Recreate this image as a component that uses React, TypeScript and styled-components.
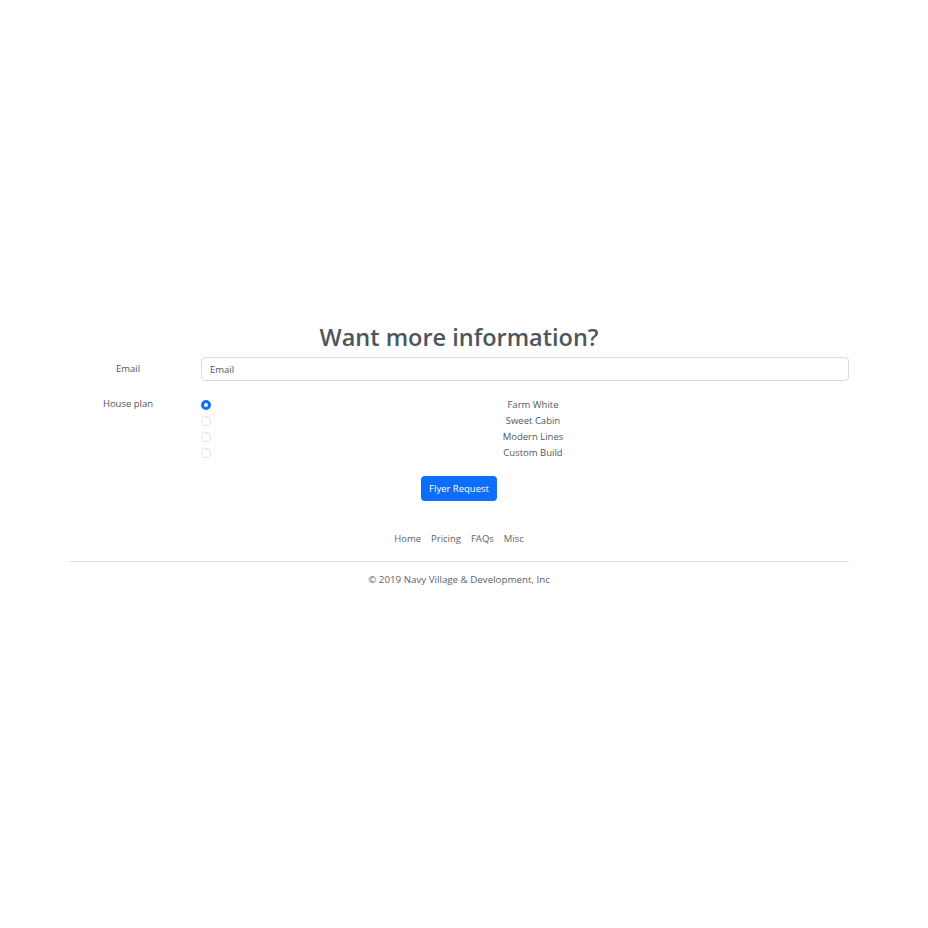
import React from "react";
import styled, { createGlobalStyle } from "styled-components";

const Global = createGlobalStyle`
  html, body { margin: 0; padding: 0; background: #fff; }
  body { font-family: "Open Sans", "Noto Sans", sans-serif; color: #212529; }
  * { box-sizing: border-box; }
`;

const Page = styled.div`
  width: 928px;
  min-height: 928px;
  display: flex;
  justify-content: center;
  padding-top: 322px;
  padding-right: 10px;
`;

const Container = styled.div`
  width: 780px;
  display: flex;
  flex-direction: column;
`;

const Heading = styled.h2`
  margin: 0;
  font-size: 23.5px;
  line-height: 31px;
  font-weight: 600;
  color: #4e565c;
  text-align: center;
`;

const Form = styled.form`
  display: flex;
  flex-direction: column;
  margin-top: 4px;
`;

const Row = styled.div<{ $mt?: number }>`
  display: grid;
  grid-template-columns: 118px 1fr;
  column-gap: 14px;
  align-items: start;
  margin-top: ${(p) => p.$mt ?? 0}px;
`;

const Label = styled.label<{ $pt?: number }>`
  font-size: 9.5px;
  line-height: 16px;
  color: #50565c;
  text-align: center;
  padding-top: ${(p) => p.$pt ?? 0}px;
`;

const Input = styled.input`
  height: 24px;
  width: 100%;
  border: 1px solid #d8dbdf;
  border-radius: 4px;
  padding: 0 8px;
  font-family: inherit;
  font-size: 9.5px;
  color: #50565c;
  &::placeholder { color: #50565c; }
  outline: none;
`;

const Options = styled.div`
  display: flex;
  flex-direction: column;
  padding-top: 0.5px;
`;

const Option = styled.label`
  display: flex;
  align-items: center;
  height: 16.2px;
  gap: 6px;
`;

const Radio = styled.span<{ $checked?: boolean }>`
  width: 10px;
  height: 10px;
  border-radius: 50%;
  flex: none;
  ${(p) =>
    p.$checked
      ? `background: #fff; border: 3px solid #0d6efd;`
      : `background: #fff; border: 1px solid #dcdee3;`}
`;

const OptionText = styled.span`
  flex: 1;
  text-align: center;
  font-size: 9.5px;
  line-height: 16px;
  color: #50565c;
`;

const ButtonWrap = styled.div`
  display: flex;
  justify-content: center;
  margin-top: 15px;
`;

const Button = styled.button`
  height: 25px;
  padding: 0 8px;
  background: #0d6efd;
  border: none;
  border-radius: 4px;
  color: #fff;
  font-family: inherit;
  font-size: 9.5px;
`;

const Footer = styled.footer`
  margin-top: 30px;
  display: flex;
  flex-direction: column;
  align-items: center;
`;

const Nav = styled.nav`
  display: flex;
  gap: 10px;
  padding-bottom: 14px;
  width: 100%;
  justify-content: center;
  border-bottom: 1px solid #dee2e6;
`;

const NavLink = styled.a`
  font-size: 9.5px;
  line-height: 16px;
  color: #5c636a;
  text-decoration: none;
`;

const Copy = styled.p`
  margin: 10px 0 0;
  font-size: 9.75px;
  line-height: 16px;
  color: #5c636a;
`;

const plans = ["Farm White", "Sweet Cabin", "Modern Lines", "Custom Build"];

export default function App() {
  return (
    <>
      <Global />
      <Page>
        <Container>
          <Heading>Want more information?</Heading>
          <Form>
            <Row>
              <Label $pt={4}>Email</Label>
              <Input placeholder="Email" />
            </Row>
            <Row $mt={15}>
              <Label>House plan</Label>
              <Options>
                {plans.map((p, i) => (
                  <Option key={p}>
                    <Radio $checked={i === 0} />
                    <OptionText>{p}</OptionText>
                  </Option>
                ))}
              </Options>
            </Row>
            <ButtonWrap>
              <Button type="button">Flyer Request</Button>
            </ButtonWrap>
          </Form>
          <Footer>
            <Nav>
              <NavLink href="#">Home</NavLink>
              <NavLink href="#">Pricing</NavLink>
              <NavLink href="#">FAQs</NavLink>
              <NavLink href="#">Misc</NavLink>
            </Nav>
            <Copy>© 2019 Navy Village &amp; Development, Inc</Copy>
          </Footer>
        </Container>
      </Page>
    </>
  );
}
